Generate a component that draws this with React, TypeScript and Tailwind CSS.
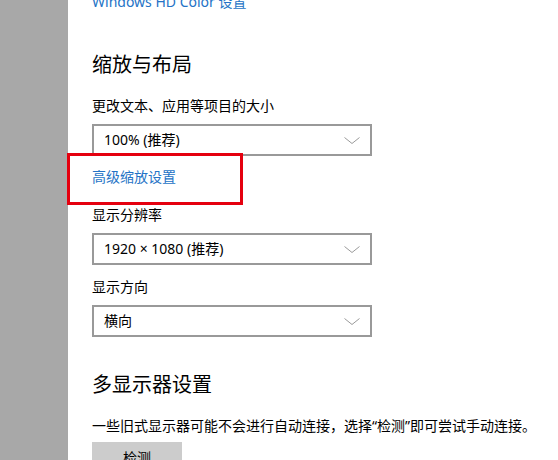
import { useState } from 'react'

const font = "font-['Segoe_UI','Noto_Sans','Noto_Sans_CJK_SC',sans-serif]"

function Chevron() {
  return (
    <svg width="16" height="7" viewBox="0 0 16 7" fill="none" className="shrink-0">
      <path d="M0.5 0.5 L8 6.5 L15.5 0.5" stroke="#9a9a9a" strokeWidth="1" />
    </svg>
  )
}

function Select({ value, className = '' }: { value: string; className?: string }) {
  return (
    <div
      className={`flex h-[32px] w-[280px] shrink-0 items-center justify-between border-2 border-[#999999] bg-white pl-[10px] pr-[10px] ${className}`}
    >
      <span className="text-[14px] leading-[20px] text-black">{value}</span>
      <Chevron />
    </div>
  )
}

export default function App() {
  const [hover] = useState(false)

  return (
    <div className={`flex h-[460px] w-[558px] items-start overflow-hidden bg-white ${font}`}>
      {/* dimmed nav pane */}
      <div className="w-[68px] shrink-0 self-stretch bg-[#a8a8a8]" />

      <div className="flex flex-col pl-[24px]">
        <a className="-mt-[8px] text-[14px] leading-[20px] text-[#2473c6]">Windows HD Color 设置</a>

        <h2 className="mt-[39px] text-[20px] leading-[28px] text-black">缩放与布局</h2>

        <p className="mt-[17px] text-[14px] leading-[20px] text-black">更改文本、应用等项目的大小</p>
        <Select value="100% (推荐)" className="mt-[8px]" />

        {/* highlight annotation */}
        <div className="relative z-10 -ml-[25px] -mt-[3px] flex h-[52px] w-[176px] shrink-0 items-center border-[3px] border-[#e5000f] pb-[4px] pl-[22px]">
          <a className={`text-[14px] leading-[20px] ${hover ? 'underline' : ''} text-[#2473c6]`}>高级缩放设置</a>
        </div>

        <p className="text-[14px] leading-[20px] text-black">显示分辨率</p>
        <Select value="1920 × 1080 (推荐)" className="mt-[8px]" />

        <p className="mt-[12px] text-[14px] leading-[20px] text-black">显示方向</p>
        <Select value="横向" className="mt-[8px]" />

        <h2 className="mt-[34px] text-[20px] leading-[28px] text-black">多显示器设置</h2>

        <p className="mt-[17px] whitespace-nowrap text-[14px] leading-[20px] text-black">
          一些旧式显示器可能不会进行自动连接，选择“检测”即可尝试手动连接。
        </p>

        <button className="mt-[6px] flex h-[32px] w-[90px] shrink-0 items-center justify-center bg-[#cccccc] text-[14px] leading-[20px] text-black">
          检测
        </button>
      </div>
    </div>
  )
}
